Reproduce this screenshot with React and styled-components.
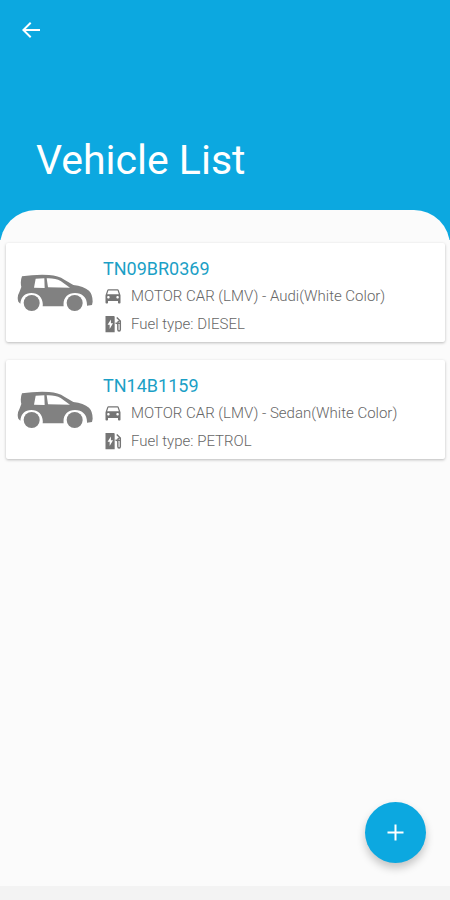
import React from "react";
import styled, { createGlobalStyle } from "styled-components";

const GlobalStyle = createGlobalStyle`
  *, *::before, *::after { box-sizing: border-box; }
  body {
    margin: 0;
    background: #fbfbfb;
    font-family: Roboto, "Liberation Sans", sans-serif;
  }
`;

const Screen = styled.div`
  display: flex;
  flex-direction: column;
  min-height: 100vh;
  background: linear-gradient(#0ca8e0 240px, #fbfbfb 240px);
`;

const Header = styled.header`
  display: flex;
  flex-direction: column;
  align-items: flex-start;
  justify-content: space-between;
  height: 210px;
  padding: 18px 36px 26px 19px;
  color: #fff;
`;

const BackButton = styled.button`
  display: flex;
  padding: 0;
  border: 0;
  background: none;
  color: inherit;
  cursor: pointer;
`;

const Title = styled.h1`
  margin: 0 0 0 17px;
  font-size: 41px;
  line-height: 48px;
  font-weight: 400;
`;

const Sheet = styled.main`
  flex: 1;
  padding: 33px 5px 96px 6px;
  border-radius: 36px 36px 0 0;
  background: #fbfbfb;
`;

const VehicleList = styled.ul`
  display: flex;
  flex-direction: column;
  gap: 18px;
  margin: 0;
  padding: 0;
  list-style: none;
`;

const Card = styled.li`
  display: flex;
  align-items: center;
  gap: 10px;
  min-height: 99px;
  padding: 0 11px;
  border-radius: 2px;
  background: #fff;
  box-shadow: 0 1px 3px rgba(0, 0, 0, 0.26);
`;

const Details = styled.div`
  min-width: 0;
  padding-top: 8px;
`;

const Plate = styled.h2`
  margin: 0;
  font-size: 18px;
  line-height: 26px;
  font-weight: 400;
  color: #1b9fc6;
`;

const Detail = styled.p`
  display: flex;
  align-items: center;
  gap: 8px;
  margin: 0;
  font-size: 15px;
  line-height: 28px;
  font-weight: 300;
  color: #666;
  white-space: nowrap;
`;

const SmallIcon = styled.svg`
  flex: none;
  width: 20px;
  height: 20px;
  fill: #757575;
`;

const CarArt = styled.svg`
  flex: none;
  width: 76px;
  height: 38px;
  fill: #818181;
`;

const AddButton = styled.button`
  position: fixed;
  right: 24px;
  bottom: 37px;
  display: flex;
  align-items: center;
  justify-content: center;
  width: 61px;
  height: 61px;
  padding: 0;
  border: 0;
  border-radius: 50%;
  background: #0ca8e0;
  color: #fff;
  box-shadow: 0 5px 8px rgba(0, 0, 0, 0.22);
  cursor: pointer;
`;

const BottomBar = styled.footer`
  height: 14px;
  background: #f3f3f3;
`;

const vehicles = [
  { plate: "TN09BR0369", model: "MOTOR CAR (LMV) - Audi(White Color)", fuel: "DIESEL" },
  { plate: "TN14B1159", model: "MOTOR CAR (LMV) - Sedan(White Color)", fuel: "PETROL" },
];

function SideCar() {
  return (
    <CarArt viewBox="50 116 228 114" aria-hidden="true">
      <path d="M65 123 Q104 117 146 119 Q174 121 192 133 L219 149 Q250 153 266 166 Q277 177 277 199 L275 209 L260 211 C261 187 246 173 224 173 C201 173 187 189 190 213 L127 213 C130 189 115 173 93 173 C74 173 62 184 60 205 L54 199 Q49 184 57 171 L63 155 Q59 138 65 123 Z" />
      <path
        d="M106 130 L132 129 L133 158 L101 157 Z M139 129 Q165 128 181 137 L209 157 L143 156 Z"
        fill="#fff"
      />
      <circle cx="94" cy="203" r="24" />
      <circle cx="223" cy="203" r="24" />
    </CarArt>
  );
}

function VehicleCard({ plate, model, fuel }) {
  return (
    <Card>
      <SideCar />
      <Details>
        <Plate>{plate}</Plate>
        <Detail>
          <SmallIcon viewBox="0 0 24 24" aria-hidden="true">
            <path d="M18.92 5.01C18.72 4.42 18.16 4 17.5 4h-11c-.66 0-1.21.42-1.42 1.01L3 11v9c0 .55.45 1 1 1h1c.55 0 1-.45 1-1v-2h12v2c0 .55.45 1 1 1h1c.55 0 1-.45 1-1v-9l-2.08-5.99zM6.5 15c-.83 0-1.5-.67-1.5-1.5S5.67 12 6.5 12s1.5.67 1.5 1.5S7.33 15 6.5 15zm11 0c-.83 0-1.5-.67-1.5-1.5s.67-1.5 1.5-1.5 1.5.67 1.5 1.5-.67 1.5-1.5 1.5zM5 10l1.5-4.5h11L19 10H5z" />
          </SmallIcon>
          {model}
        </Detail>
        <Detail>
          <SmallIcon viewBox="0 0 24 24" aria-hidden="true">
            <path
              fillRule="evenodd"
              d="M3 2.5h10a1 1 0 0 1 1 1V22H3ZM9.5 6.5L5.5 13H8v5l4-7H9.5Z"
            />
            <path
              d="M15 11h1.2q1.6 0 1.6 1.8v5.7q0 1.8 1.5 1.8t1.5-1.8V8.5L16.5 4.3M20.5 8.5h-1.2q-1.4 0-1.4 1.5t2.7 1.5"
              fill="none"
              stroke="#757575"
              strokeWidth="1.7"
            />
          </SmallIcon>
          Fuel type: {fuel}
        </Detail>
      </Details>
    </Card>
  );
}

export default function App() {
  return (
    <>
      <GlobalStyle />
      <Screen>
        <Header>
          <BackButton type="button" aria-label="Back">
            <svg width="24" height="24" viewBox="0 0 24 24" fill="currentColor" aria-hidden="true">
              <path d="M21 11H6.8l5.6-5.6L11 4l-8 8 8 8 1.4-1.4L6.8 13H21z" />
            </svg>
          </BackButton>
          <Title>Vehicle List</Title>
        </Header>
        <Sheet>
          <VehicleList>
            {vehicles.map((vehicle) => (
              <VehicleCard key={vehicle.plate} {...vehicle} />
            ))}
          </VehicleList>
        </Sheet>
        <BottomBar />
        <AddButton type="button" aria-label="Add vehicle">
          <svg width="17" height="17" viewBox="0 0 17 17" aria-hidden="true">
            <path d="M8.5 0.5v16M0.5 8.5h16" stroke="currentColor" strokeWidth="2" />
          </svg>
        </AddButton>
      </Screen>
    </>
  );
}
